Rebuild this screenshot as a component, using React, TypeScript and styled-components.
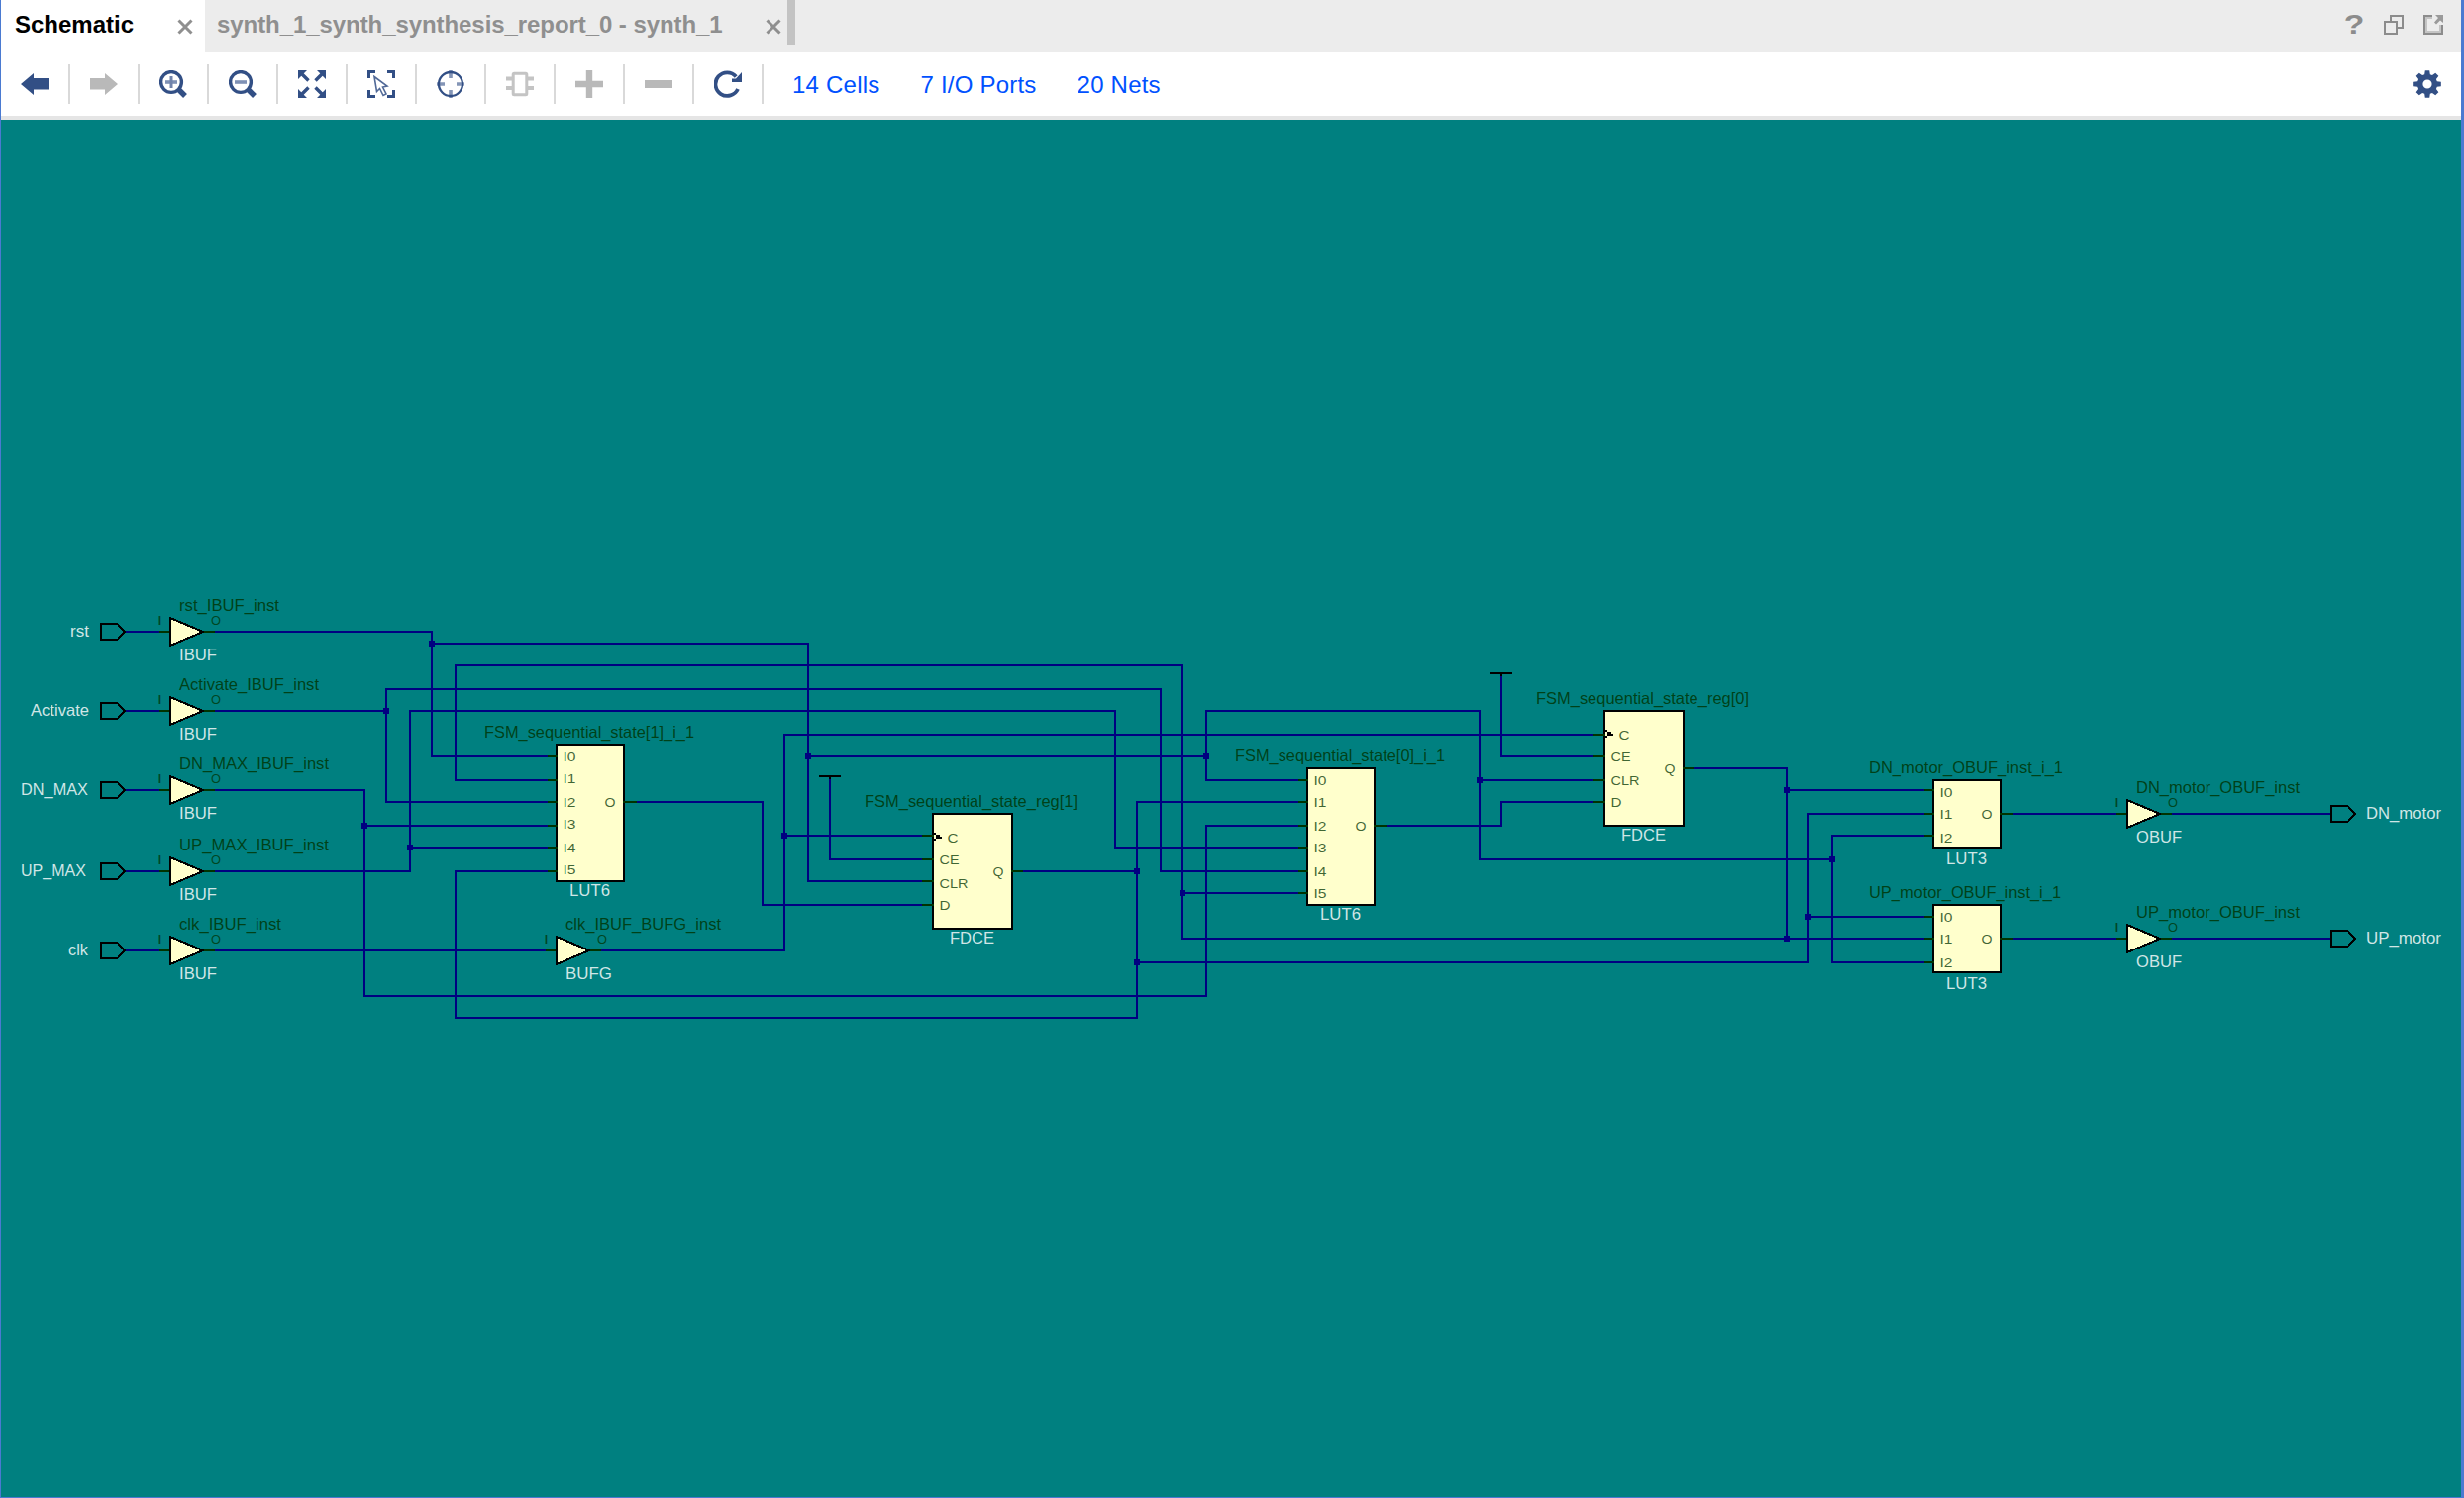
import React from "react";
import styled, { createGlobalStyle } from "styled-components";

const NAVY = "#324f85";
const GREY = "#b9b9b9";
const NET = "#000080";
const PIN = "#003300";

const GlobalStyle = createGlobalStyle`
  html, body { margin: 0; padding: 0; }
  body { font-family: "Liberation Sans", Arial, sans-serif; overflow: hidden; }
`;

const Window = styled.div`
  box-sizing: border-box;
  display: flex;
  flex-direction: column;
  width: 2488px;
  height: 1513px;
  border-left: 1px solid #4a7ad1;
  border-right: 3px solid #4a7ad1;
  border-bottom: 1px solid #4a7ad1;
  background: #ffffff;
`;

const TabBar = styled.header`
  display: flex;
  height: 53px;
  background: #ececec;
`;

const Tab = styled.div<{ $active?: boolean; $width: number }>`
  box-sizing: border-box;
  display: flex;
  justify-content: space-between;
  align-items: flex-start;
  width: ${(p) => p.$width}px;
  padding: ${(p) => (p.$active ? "0 12px 0 14px" : "0 6px 0 12px")};
  background: ${(p) => (p.$active ? "#ffffff" : "transparent")};
  color: ${(p) => (p.$active ? "#000000" : "#8f8f8f")};
`;

const TabTitle = styled.span<{ $spacing: number }>`
  font-size: 24px;
  font-weight: 700;
  line-height: 50px;
  white-space: nowrap;
  letter-spacing: ${(p) => p.$spacing}px;
`;

const CloseButton = styled.button`
  display: flex;
  margin: 19px 0 0;
  padding: 0;
  border: 0;
  background: none;
`;

const TabScroll = styled.div`
  width: 8px;
  height: 45px;
  background: #c3c3c3;
`;

const WindowActions = styled.div`
  display: flex;
  gap: 20px;
  margin-left: auto;
  padding: 15px 18px 0 0;
`;

const HelpMark = styled.span`
  width: 20px;
  height: 32px;
  margin-top: -5px;
  color: #8c8c8c;
  font-size: 27px;
  font-weight: 700;
  line-height: 31px;
  text-align: center;
  transform: scaleX(1.25);
`;

const Toolbar = styled.nav`
  box-sizing: border-box;
  display: flex;
  align-items: center;
  height: 68px;
  border-bottom: 4px solid #e5e5e5;
`;

const ToolButton = styled.button`
  box-sizing: border-box;
  display: flex;
  align-items: center;
  justify-content: center;
  width: 70px;
  height: 40px;
  padding: 0;
  border: 0;
  border-right: 2px solid #d9d9d9;
  background: none;
`;

const Counters = styled.div`
  display: flex;
  gap: 41px;
  margin-left: 29px;
  padding-top: 2px;
`;

const Counter = styled.a`
  color: #0051ff;
  font-size: 24px;
  line-height: 28px;
  letter-spacing: 0.22px;
  white-space: nowrap;
`;

const SettingsButton = styled.button`
  display: flex;
  margin-left: auto;
  padding: 0 20px 0 0;
  border: 0;
  background: none;
`;

const Canvas = styled.main`
  flex: 1;
  min-height: 0;
  background: #008080;
`;

const Drawing = styled.svg`
  display: block;
  width: 2484px;
  height: 1391px;
`;

const SvgText = styled.text<{ $size: number }>`
  font-family: "Liberation Sans", Arial, sans-serif;
  font-size: ${(p) => p.$size}px;
`;

function Icon({ size = 28, children }: { size?: number; children: React.ReactNode }) {
  return (
    <svg width={size} height={size} viewBox={`0 0 ${size} ${size}`} fill="none">
      {children}
    </svg>
  );
}

const CloseIcon = () => (
  <Icon size={16}>
    <path d="M1.5 1.5 14.5 14.5M14.5 1.5 1.5 14.5" stroke="#8f8f8f" strokeWidth="3" />
  </Icon>
);

const Magnifier = ({ plus }: { plus?: boolean }) => (
  <Icon>
    <circle cx="12" cy="12" r="10.4" stroke={NAVY} strokeWidth="3.4" />
    <path d="M19.5 19.5 26 26" stroke={NAVY} strokeWidth="5.4" />
    <path d="M6 12H18" stroke="#7f91b5" strokeWidth="3.6" />
    {plus && <path d="M12 6V18" stroke="#7083ab" strokeWidth="3" />}
  </Icon>
);

const gearPath = (() => {
  const pts: string[] = [];
  for (let i = 0; i < 8; i++) {
    const a = (i * Math.PI) / 4;
    const put = (r: number, d: number) =>
      pts.push(`${(14 + r * Math.sin(a + d)).toFixed(2)} ${(14 - r * Math.cos(a + d)).toFixed(2)}`);
    put(10.2, -0.28);
    put(14, -0.16);
    put(14, 0.16);
    put(10.2, 0.28);
  }
  return `M${pts.join("L")}ZM18.6 14A4.6 4.6 0 1 0 9.4 14A4.6 4.6 0 1 0 18.6 14Z`;
})();

const tools: { name: string; icon: React.ReactNode }[] = [
  { name: "Back", icon: <Icon><path d="M0 14 13 3V8H28V19.6H13V25Z" fill={NAVY} /></Icon> },
  { name: "Forward", icon: <Icon><path d="M28 14 15 3V8H0V19.6H15V25Z" fill={GREY} /></Icon> },
  { name: "Zoom in", icon: <Magnifier plus /> },
  { name: "Zoom out", icon: <Magnifier /> },
  {
    name: "Zoom fit",
    icon: (
      <Icon>
        <path d="M0 0H9L0 9ZM28 0H19L28 9ZM0 28H9L0 19ZM28 28H19L28 19Z" fill={NAVY} />
        <path d="M3 3 10.5 10.5M25 3 17.5 10.5M3 25 10.5 17.5M25 25 17.5 17.5" stroke={NAVY} strokeWidth="3.4" />
      </Icon>
    ),
  },
  {
    name: "Select area",
    icon: (
      <Icon>
        <path d="M1.5 8V1.5H8M20 1.5H26.5V8M1.5 20V26.5H8M20 26.5H26.5V20" stroke={NAVY} strokeWidth="3" />
        <path d="M7 6.5 20 16 15.5 17 19 24 16 25.5 12.5 18.5 9.5 21.5Z" stroke={NAVY} strokeOpacity=".85" strokeWidth="1.6" />
      </Icon>
    ),
  },
  {
    name: "Center",
    icon: (
      <Icon>
        <circle cx="14" cy="14" r="12" stroke={NAVY} strokeWidth="2.3" />
        <path d="M14 0V8M14 20V28M0 14H8M20 14H28" stroke={NAVY} strokeOpacity=".6" strokeWidth="3.6" />
      </Icon>
    ),
  },
  {
    name: "Cell pins",
    icon: (
      <Icon>
        <path d="M0 8.5H6M0 18H6M22 8.5H28M22 18H28" stroke="#c4c4c4" strokeWidth="4" />
        <rect x="7.2" y="3.2" width="13.6" height="21.6" rx="1" stroke="#c4c4c4" strokeWidth="3" />
      </Icon>
    ),
  },
  { name: "Add", icon: <Icon><path d="M14 0V28M0 14H28" stroke={GREY} strokeWidth="6.4" /></Icon> },
  { name: "Remove", icon: <Icon><path d="M0 14H28" stroke={GREY} strokeWidth="8" /></Icon> },
  {
    name: "Reload",
    icon: (
      <Icon>
        <path d="M22.2 6.4A11.8 11.8 0 1 0 24 19" stroke={NAVY} strokeWidth="3.8" />
        <path d="M28 2V12H18V8.5H22Z" fill={NAVY} />
      </Icon>
    ),
  },
];

const counters = ["14 Cells", "7 I/O Ports", "20 Nets"];

/* Schematic data, in window pixels. */

type Kind = "name" | "type" | "pin";
const textStyle: Record<Kind, { size: number; fill: string; opacity: number }> = {
  name: { size: 16.5, fill: PIN, opacity: 0.82 },
  type: { size: 16.5, fill: "#ffffff", opacity: 0.82 },
  pin: { size: 13, fill: PIN, opacity: 0.75 },
};

/* A label fitted between a left and a right ink edge. */
function Label({ kind, from, to, y, children }: { kind: Kind; from: number; to: number; y: number; children: string }) {
  const s = textStyle[kind];
  return (
    <SvgText
      $size={s.size}
      x={from - 1}
      y={y}
      textLength={to - from + 2}
      lengthAdjust="spacingAndGlyphs"
      fill={s.fill}
      fillOpacity={s.opacity}
    >
      {children}
    </SvgText>
  );
}

const nets = [
  "M126 638H161M126 718H161M126 798H161M126 880H161M126 960H161",
  "M217 638H437M436 637V764H553M436 650H816V890H931M816 764H1218M1311 788H1218V718H1494V868H1850M1494 788H1609M1943 844H1850V972H1943",
  "M553 788H460V672H1194V948H1943M1194 902H1311M1711 776H1804V948M1804 798H1943",
  "M217 718H390M553 810H390V696H1172V880H1311",
  "M217 880H414V718H1126V856H1311M414 856H553",
  "M217 798H368V1006H1218V834H1311M368 834H553",
  "M217 960H553M607 960H792V742H1609M792 844H931",
  "M643 810H770V914H931",
  "M1033 880H1148M1311 810H1148V1028H460V880H553M1148 972H1826V822H1943M1826 926H1943",
  "M1401 834H1516V810H1609",
  "M838 787V868H931M1516 683V764H1609",
  "M2033 822H2137M2033 948H2137M2193 822H2354M2193 948H2354",
];

const junctions = [
  [436, 650], [390, 718], [368, 834], [414, 856], [792, 844], [816, 764], [1148, 880], [1148, 972],
  [1194, 902], [1218, 764], [1494, 788], [1804, 798], [1804, 948], [1826, 926], [1850, 868],
];

interface Buf { x: number; y: number; name: string; end: number; type: string; typeEnd: number }
const buffers: Buf[] = [
  { x: 172, y: 638, name: "rst_IBUF_inst", end: 281, type: "IBUF", typeEnd: 218 },
  { x: 172, y: 718, name: "Activate_IBUF_inst", end: 321, type: "IBUF", typeEnd: 218 },
  { x: 172, y: 798, name: "DN_MAX_IBUF_inst", end: 331, type: "IBUF", typeEnd: 218 },
  { x: 172, y: 880, name: "UP_MAX_IBUF_inst", end: 331, type: "IBUF", typeEnd: 218 },
  { x: 172, y: 960, name: "clk_IBUF_inst", end: 283, type: "IBUF", typeEnd: 218 },
  { x: 562, y: 960, name: "clk_IBUF_BUFG_inst", end: 727, type: "BUFG", typeEnd: 617 },
  { x: 2148, y: 822, name: "DN_motor_OBUF_inst", end: 2321, type: "OBUF", typeEnd: 2202 },
  { x: 2148, y: 948, name: "UP_motor_OBUF_inst", end: 2321, type: "OBUF", typeEnd: 2202 },
];

function Buffer({ x, y, name, end, type, typeEnd }: Buf) {
  return (
    <g>
      <path d={`M${x - 11} ${y}H${x}M${x + 32} ${y}H${x + 45}`} stroke={PIN} strokeWidth="2" />
      <path d={`M${x} ${y - 14}L${x + 33} ${y}L${x} ${y + 14}Z`} fill="#ffffcc" stroke="#000" strokeWidth="2" />
      <Label kind="name" from={x + 10} to={end} y={y - 20.8}>{name}</Label>
      <Label kind="type" from={x + 10} to={typeEnd} y={y + 29}>{type}</Label>
      <Label kind="pin" from={x - 12} to={x - 9} y={y - 7.3}>I</Label>
      <Label kind="pin" from={x + 42} to={x + 50} y={y - 7.3}>O</Label>
    </g>
  );
}

interface Port { x: number; y: number; label: string; from: number; to: number }
const ports: Port[] = [
  { x: 102, y: 638, label: "rst", from: 72, to: 89 },
  { x: 102, y: 718, label: "Activate", from: 32, to: 89 },
  { x: 102, y: 798, label: "DN_MAX", from: 22, to: 88 },
  { x: 102, y: 880, label: "UP_MAX", from: 22, to: 86 },
  { x: 102, y: 960, label: "clk", from: 70, to: 88 },
  { x: 2354, y: 822, label: "DN_motor", from: 2390, to: 2464 },
  { x: 2354, y: 948, label: "UP_motor", from: 2390, to: 2464 },
];

/* pins: label, y of the lead, y of the text baseline, text width */
interface Block {
  x: number; y: number; w: number; h: number; lead: number; outLead: number;
  name: string; nameAt: [number, number, number];
  type: string; typeAt: [number, number, number];
  pins: [string, number, number, number][];
  out: [string, number];
  clocked?: boolean;
}
const blocks: Block[] = [
  {
    x: 562, y: 752, w: 68, h: 138, lead: 9, outLead: 13,
    name: "FSM_sequential_state[1]_i_1", nameAt: [490, 700, 745],
    type: "LUT6", typeAt: [576, 615, 905],
    pins: [["I0", 764, 768.7, 11], ["I1", 788, 790.7, 11], ["I2", 810, 814.7, 11], ["I3", 834, 836.7, 11], ["I4", 856, 860.7, 11], ["I5", 880, 882.7, 11]],
    out: ["O", 810],
  },
  {
    x: 942, y: 822, w: 80, h: 116, lead: 11, outLead: 11,
    name: "FSM_sequential_state_reg[1]", nameAt: [874, 1087, 815],
    type: "FDCE", typeAt: [960, 1003, 952.7],
    pins: [["C", 844, 850.7, 9], ["CE", 868, 872.7, 18], ["CLR", 890, 896.7, 27], ["D", 914, 918.7, 9]],
    out: ["Q", 880], clocked: true,
  },
  {
    x: 1320, y: 776, w: 68, h: 138, lead: 9, outLead: 13,
    name: "FSM_sequential_state[0]_i_1", nameAt: [1248, 1458, 769],
    type: "LUT6", typeAt: [1334, 1373, 929],
    pins: [["I0", 788, 792.7, 11], ["I1", 810, 814.7, 11], ["I2", 834, 838.7, 11], ["I3", 856, 860.7, 11], ["I4", 880, 884.7, 11], ["I5", 902, 906.7, 11]],
    out: ["O", 834],
  },
  {
    x: 1620, y: 718, w: 80, h: 116, lead: 11, outLead: 11,
    name: "FSM_sequential_state_reg[0]", nameAt: [1552, 1765, 711],
    type: "FDCE", typeAt: [1638, 1681, 848.7],
    pins: [["C", 742, 746.7, 9], ["CE", 764, 768.7, 18], ["CLR", 788, 792.7, 27], ["D", 810, 814.7, 9]],
    out: ["Q", 776], clocked: true,
  },
  {
    x: 1952, y: 788, w: 68, h: 68, lead: 9, outLead: 13,
    name: "DN_motor_OBUF_inst_i_1", nameAt: [1888, 2082, 781],
    type: "LUT3", typeAt: [1966, 2005, 873],
    pins: [["I0", 798, 804.7, 11], ["I1", 822, 826.7, 11], ["I2", 844, 850.7, 11]],
    out: ["O", 822],
  },
  {
    x: 1952, y: 914, w: 68, h: 68, lead: 9, outLead: 13,
    name: "UP_motor_OBUF_inst_i_1", nameAt: [1888, 2080, 907],
    type: "LUT3", typeAt: [1966, 2005, 999],
    pins: [["I0", 926, 930.7, 11], ["I1", 948, 952.7, 11], ["I2", 972, 976.7, 11]],
    out: ["O", 948],
  },
];

function CellBlock({ b }: { b: Block }) {
  const right = b.x + b.w;
  const clk = b.pins[0][2] - 9.7;
  return (
    <g>
      <rect x={b.x} y={b.y} width={b.w} height={b.h} fill="#ffffcc" stroke="#000" strokeWidth="2" />
      {b.pins.map(([label, y, base, width]) => {
        const left = b.x + (label === "C" ? 15.5 : 7.5);
        return (
          <g key={label}>
            <path d={`M${b.x - b.lead} ${y}H${b.x + 1}`} stroke={PIN} strokeWidth="2" />
            <Label kind="pin" from={left} to={left + width} y={base}>{label}</Label>
          </g>
        );
      })}
      {b.clocked && (
        <path d={`M${b.x + 1} ${clk}h2v2h4v2h2v2h-6v-4h-2zM${b.x + 1} ${clk + 6}h2v2h-2z`} fill="#000" />
      )}
      <path d={`M${right - 1} ${b.out[1]}H${right + b.outLead}`} stroke={PIN} strokeWidth="2" />
      <Label kind="pin" from={right - 18.5} to={right - 9.5} y={b.out[1] + 4.7}>{b.out[0]}</Label>
      <Label kind="name" from={b.nameAt[0]} to={b.nameAt[1]} y={b.nameAt[2]}>{b.name}</Label>
      <Label kind="type" from={b.typeAt[0]} to={b.typeAt[1]} y={b.typeAt[2]}>{b.type}</Label>
    </g>
  );
}

function Schematic() {
  return (
    <Drawing viewBox="1 121 2484 1391">
      <g shapeRendering="crispEdges">
        {nets.map((d) => (
          <path key={d} d={d} fill="none" stroke={NET} strokeWidth="2" strokeLinecap="butt" />
        ))}
        {junctions.map(([x, y]) => (
          <rect key={`${x}-${y}`} x={x - 3} y={y - 3} width="6" height="6" fill={NET} />
        ))}
        <path d="M827 784H849M838 784V787M1505 680H1527M1516 680V683" stroke="#000" strokeWidth="2" />
        {blocks.map((b) => <CellBlock key={b.name} b={b} />)}
        {buffers.map((b) => <Buffer key={b.name} {...b} />)}
        {ports.map((p) => (
          <g key={p.label}>
            <path
              d={`M${p.x} ${p.y - 8}h16.5l7.5 8l-7.5 8h-16.5z`}
              fill="none"
              stroke="#000"
              strokeWidth="2"
            />
            <Label kind="type" from={p.from} to={p.to} y={p.y + 4.8}>{p.label}</Label>
          </g>
        ))}
      </g>
    </Drawing>
  );
}

export default function App() {
  return (
    <>
      <GlobalStyle />
      <Window>
        <TabBar>
          <Tab $active $width={206}>
            <TabTitle $spacing={0}>Schematic</TabTitle>
            <CloseButton aria-label="Close"><CloseIcon /></CloseButton>
          </Tab>
          <Tab $width={588}>
            <TabTitle $spacing={-0.07}>synth_1_synth_synthesis_report_0 - synth_1</TabTitle>
            <CloseButton aria-label="Close"><CloseIcon /></CloseButton>
          </Tab>
          <TabScroll />
          <WindowActions>
            <HelpMark>?</HelpMark>
            <Icon size={20}>
              <path d="M7 6V1H19V13H14" stroke="#8c8c8c" strokeWidth="2" />
              <rect x="1" y="7" width="12" height="12" stroke="#8c8c8c" strokeWidth="2" />
            </Icon>
            <Icon size={20}>
              <path d="M9 3H3V17H17V10" stroke="#c4c4c4" strokeWidth="2" />
              <path d="M9 1H1V19H19V10" stroke="#8c8c8c" strokeWidth="2" />
              <path d="M12 0H20V8L17 5.5L13 9.5L11 7.5L15 3Z" fill="#9a9a9a" />
            </Icon>
          </WindowActions>
        </TabBar>
        <Toolbar>
          {tools.map((t) => (
            <ToolButton key={t.name} aria-label={t.name}>{t.icon}</ToolButton>
          ))}
          <Counters>
            {counters.map((c) => <Counter key={c}>{c}</Counter>)}
          </Counters>
          <SettingsButton aria-label="Settings">
            <Icon><path d={gearPath} fill={NAVY} fillRule="evenodd" /></Icon>
          </SettingsButton>
        </Toolbar>
        <Canvas>
          <Schematic />
        </Canvas>
      </Window>
    </>
  );
}
